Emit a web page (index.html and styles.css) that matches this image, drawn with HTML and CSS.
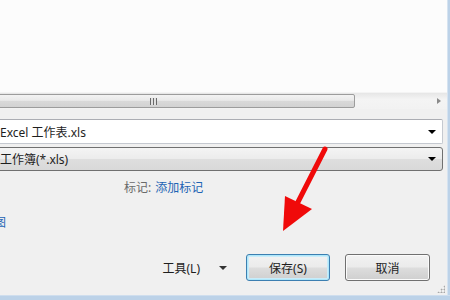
FILE: index.html
```html
<!DOCTYPE html>
<html lang="zh-CN">
<head>
<meta charset="utf-8">
<title>另存为</title>
<link rel="stylesheet" href="styles.css">
</head>
<body>
<div class="window">
  <div class="body">
    <div class="main">
      <div class="list"></div>
      <div class="hscroll">
        <div class="thumb"><span class="grip"></span></div>
        <div class="track"></div>
        <div class="scroll-btn"><span class="tri-right"></span></div>
      </div>
      <div class="form">
        <div class="field filename"><span class="val">Excel 工作表.xls</span><span class="caret"></span></div>
        <div class="field filetype"><span class="val">工作簿(*.xls)</span><span class="caret"></span></div>
        <div class="tags"><span class="label">标记:</span><span class="link">添加标记</span></div>
        <div class="thumbrow"><span class="link">缩略图</span></div>
        <div class="actions">
          <div class="tools"><span>工具(L)</span><span class="caret small"></span></div>
          <button class="btn primary">保存(S)</button>
          <button class="btn">取消</button>
        </div>
      </div>
    </div>
    <div class="frame-right"></div>
  </div>
  <div class="frame-bottom"></div>
  <span class="grip-corner"></span>
  <svg class="annot" width="450" height="300" viewBox="0 0 450 300">
    <line x1="325" y1="149" x2="298" y2="202" stroke="#f00a0a" stroke-width="5" stroke-linecap="round"/>
    <polygon points="285,196 312,209 283,231" fill="#f00a0a"/>
  </svg>
</div>
</body>
</html>
```
FILE: styles.css
```css
* { box-sizing: border-box; }
html, body {
  margin: 0;
  padding: 0;
  width: 450px;
  height: 300px;
  overflow: hidden;
  background: #f0f0f0;
  font-family: "Noto Sans", "Noto Sans CJK SC", sans-serif;
  font-size: 12px;
  color: #1e1e1e;
}
.window {
  position: relative;
  width: 450px;
  height: 300px;
  display: flex;
  flex-direction: column;
}
.body {
  flex: 1;
  display: flex;
  min-height: 0;
}
.main {
  flex: 1;
  display: flex;
  flex-direction: column;
  min-width: 0;
  background: #f0f0f0;
}
.frame-right {
  width: 3px;
  background: #bcd2e8;
  border-left: 1px solid #d6e3f0;
}
.frame-bottom {
  height: 5px;
  background: #bcd2e8;
  border-top: 1px solid #cfdeee;
}
.list {
  height: 92px;
  background: #fcfcfc;
}
.hscroll {
  height: 17px;
  display: flex;
  align-items: stretch;
  background: linear-gradient(#e6e6e6, #f4f4f4 40%, #f2f2f2);
  border-top: 1px solid #f4f4f4;
}
.thumb {
  width: 358px;
  margin-left: -3px;
  margin-top: 1px;
  margin-bottom: 1px;
  border: 1px solid #9c9c9c;
  border-radius: 2px;
  background: linear-gradient(#f3f3f3, #e9e9e9 45%, #d9d9d9 50%, #d2d2d2);
  display: flex;
  align-items: center;
  justify-content: center;
}
.grip {
  width: 7px;
  height: 7px;
  margin-left: -46px;
  background: repeating-linear-gradient(90deg, #6a6a6a 0 1px, #e0e0e0 1px 3px);
}
.track { flex: 1; }
.scroll-btn {
  width: 17px;
  display: flex;
  align-items: center;
  justify-content: center;
}
.tri-right {
  width: 0;
  height: 0;
  border-top: 3.5px solid transparent;
  border-bottom: 3.5px solid transparent;
  border-left: 4px solid #8a8a8a;
}
.form {
  flex: 1;
  display: flex;
  flex-direction: column;
  padding-right: 4px;
}
.field {
  display: flex;
  align-items: center;
  margin-left: -10px;
  padding-left: 9px;
  padding-right: 6px;
}
.field .val { flex: 1; white-space: nowrap; }
.filename {
  margin-top: 10px;
  height: 25px;
  background: #fff;
  border: 1px solid #c5c9d0;
  border-top-color: #abadb3;
  border-radius: 2px;
}
.filetype {
  margin-top: 3px;
  height: 24px;
  background: linear-gradient(#f4f4f4, #ececec 48%, #dedede 52%, #d9d9d9);
  border: 1px solid #707070;
  border-radius: 3px;
}
.caret {
  width: 0;
  height: 0;
  border-left: 4px solid transparent;
  border-right: 4px solid transparent;
  border-top: 4px solid #000;
}
.caret.small { border-top-color: #333; }
.tags {
  margin-top: 8px;
  height: 16px;
  padding-left: 124px;
  display: flex;
  align-items: center;
  gap: 4px;
}
.label { color: #6a6a6a; }
.link { color: #1e64b4; }
.thumbrow {
  margin-top: 19px;
  height: 16px;
  margin-left: -30px;
  display: flex;
  align-items: center;
}
.actions {
  margin-top: 24px;
  display: flex;
  align-items: center;
  justify-content: flex-end;
  padding-right: 13px;
}
.tools {
  display: flex;
  align-items: center;
  gap: 19px;
  margin-right: 19px;
}
.btn {
  font: inherit;
  color: #1e1e1e;
  height: 27px;
  width: 85px;
  border: 1px solid #707070;
  border-radius: 3px;
  background: linear-gradient(#f2f2f2, #ebebeb 48%, #dddddd 52%, #cfcfcf);
  padding: 0;
  box-shadow: inset 0 0 0 1px #fbfbfb;
}
.btn.primary {
  width: 84px;
  margin-right: 15px;
  border-color: #3c7fb1;
  box-shadow: inset 0 0 0 1px #48d8fb33, inset 0 0 0 2px #c9ecfa;
}
.grip-corner {
  position: absolute;
  right: 5px;
  bottom: 7px;
  width: 8px;
  height: 8px;
  background: radial-gradient(circle, #a8a8a8 0.8px, transparent 1.2px) 0 0 / 3px 3px;
  clip-path: polygon(100% 0, 100% 100%, 0 100%);
}
.annot {
  position: absolute;
  left: 0;
  top: 0;
  pointer-events: none;
}
```
